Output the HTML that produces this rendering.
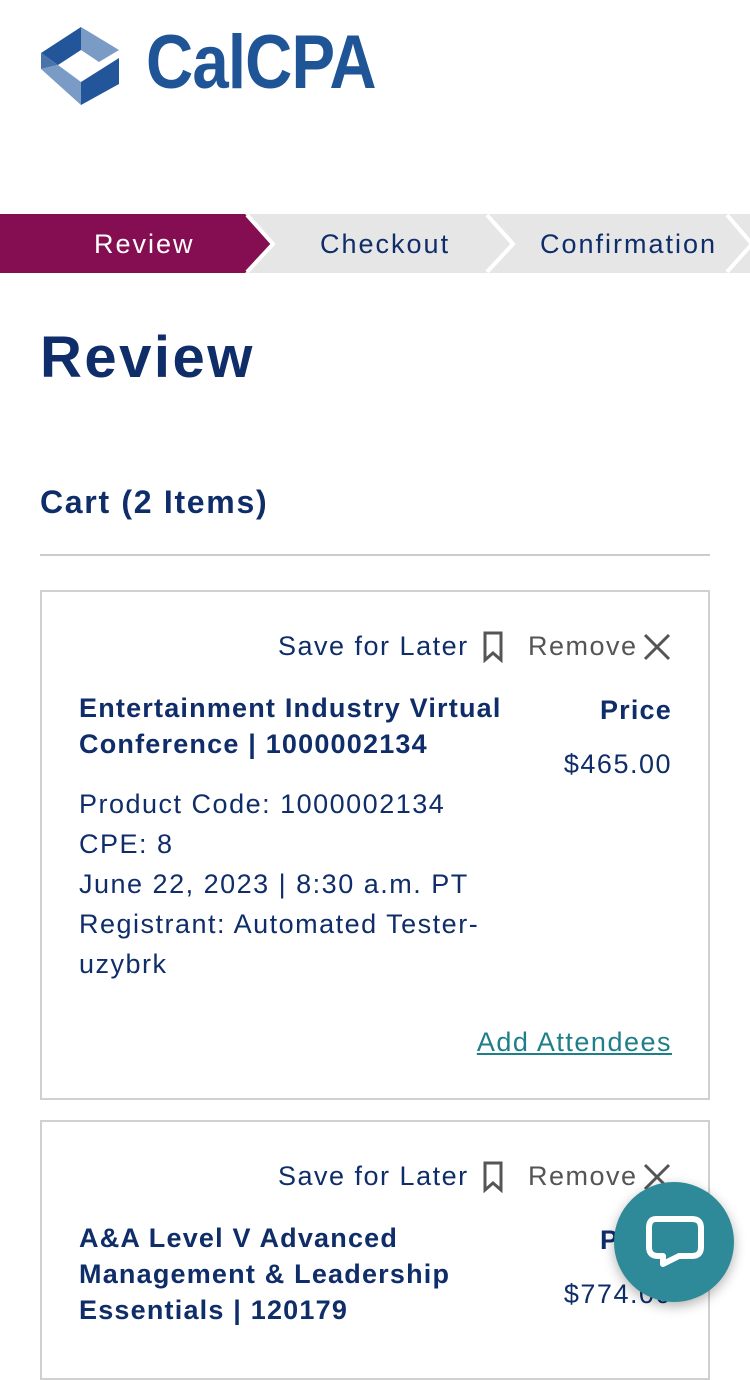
<!DOCTYPE html>
<html><head><meta charset="utf-8"><style>
*{margin:0;padding:0;box-sizing:border-box}
body{width:750px;height:1334px;overflow:hidden;background:#fff;font-family:"Liberation Sans",sans-serif;color:#0f2d69;position:relative}
.abs{position:absolute}
.logo-t{left:146px;top:25px;font-size:76px;font-weight:bold;color:#1f5596;font-family:"Liberation Sans Narrow","Liberation Sans",sans-serif;transform:scaleX(0.86);transform-origin:left;letter-spacing:-1px;line-height:1}
.steps{top:214px;left:0;width:750px;height:59px}
.st{font-size:27px;top:228px;line-height:32px;letter-spacing:2px}
h1{position:absolute;left:40px;top:322px;font-size:58px;font-weight:bold;line-height:72px;letter-spacing:2.5px}
.cart{left:40px;top:484px;font-size:32px;font-weight:bold;letter-spacing:1.7px}
.hr{left:40px;top:554px;width:670px;height:2px;background:#ccc}
.card{left:40px;width:670px;border:2px solid #d0d0d0}
.t{font-size:27px;line-height:36px;letter-spacing:1.5px;white-space:nowrap}
.b{font-weight:bold;letter-spacing:1.2px}
.r{right:78px;text-align:right}
</style></head><body>
<svg class="abs" style="left:40px;top:27px" width="84" height="79" viewBox="0 0 84 79">
<polygon points="1,26 41,0 41,23 18,38" fill="#23559a"/>
<polygon points="1,26 18,38 1,42" fill="#4a73aa"/>
<polygon points="41,0 79,23 59,35 41,23" fill="#7a9bc6"/>
<polygon points="1,42 18,38 41,55 41,78" fill="#7a9bc6"/>
<polygon points="41,55 79,31 79,57 41,78" fill="#23559a"/>
</svg>
<div class="abs logo-t">CalCPA</div>
<svg class="abs steps" width="750" height="59">
<rect width="750" height="59" fill="#e6e6e6"/>
<polygon points="0,0 245,0 272,30 245,59 0,59" fill="#850e52"/>
<polyline points="247,1 273,30 247,58" fill="none" stroke="#fff" stroke-width="4"/>
<polyline points="487,1 513,30 487,58" fill="none" stroke="#fff" stroke-width="4"/>
<polyline points="727,1 752,30 727,58" fill="none" stroke="#fff" stroke-width="4"/>
</svg>
<div class="abs st" style="left:94px;color:#fff">Review</div>
<div class="abs st" style="left:320px">Checkout</div>
<div class="abs st" style="left:540px">Confirmation</div>
<h1>Review</h1>
<div class="abs cart">Cart (2 Items)</div>
<div class="abs hr"></div>

<div class="abs card" style="top:590px;height:510px"></div>
<div class="abs t" style="left:278px;top:628px">Save for Later</div>
<svg class="abs" style="left:482px;top:631px" width="22" height="32"><path d="M3 2H19V29L11 22L3 29Z" fill="none" stroke="#555" stroke-width="3"/></svg>
<div class="abs t" style="left:528px;top:628px;color:#555">Remove</div>
<svg class="abs" style="left:643px;top:633px" width="28" height="28"><path d="M2 2L26 26M26 2L2 26" stroke="#555" stroke-width="3"/></svg>
<div class="abs t b" style="left:79px;top:690px;line-height:36px">Entertainment Industry Virtual<br>Conference | 1000002134</div>
<div class="abs t b r" style="top:692px">Price</div>
<div class="abs t r" style="top:746px">$465.00</div>
<div class="abs t" style="left:79px;top:784px;line-height:40px">Product Code: 1000002134<br>CPE: 8<br>June 22, 2023 | 8:30 a.m. PT<br>Registrant: Automated Tester-<br>uzybrk</div>
<div class="abs t r" style="top:1024px;color:#1f7f88;text-decoration:underline">Add Attendees</div>

<div class="abs card" style="top:1120px;height:260px"></div>
<div class="abs t" style="left:278px;top:1158px">Save for Later</div>
<svg class="abs" style="left:482px;top:1161px" width="22" height="32"><path d="M3 2H19V29L11 22L3 29Z" fill="none" stroke="#555" stroke-width="3"/></svg>
<div class="abs t" style="left:528px;top:1158px;color:#555">Remove</div>
<svg class="abs" style="left:643px;top:1163px" width="28" height="28"><path d="M2 2L26 26M26 2L2 26" stroke="#555" stroke-width="3"/></svg>
<div class="abs t b" style="left:79px;top:1220px">A&amp;A Level V Advanced<br>Management &amp; Leadership<br>Essentials | 120179</div>
<div class="abs t b r" style="top:1222px">Price</div>
<div class="abs t r" style="top:1276px">$774.00</div>

<div class="abs" style="left:614px;top:1182px;width:120px;height:120px;border-radius:50%;background:#2e8a98;box-shadow:0 4px 12px rgba(0,0,0,.3)"></div>
<svg class="abs" style="left:646px;top:1216px" width="58" height="56"><path d="M10 3H46Q55 3 55 12V31Q55 40 46 40H33L17 48V40H12Q3 40 3 31V12Q3 3 10 3Z" fill="none" stroke="#fff" stroke-width="6" stroke-linejoin="round"/></svg>
</body></html>
